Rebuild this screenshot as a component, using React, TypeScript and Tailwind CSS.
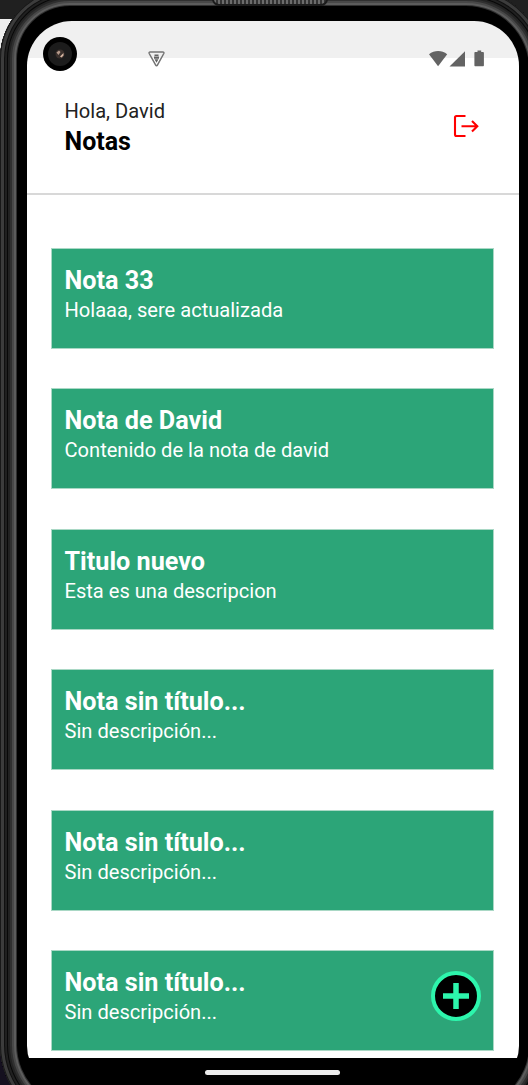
const notes = [
  { title: "Nota 33", body: "Holaaa, sere actualizada" },
  { title: "Nota de David", body: "Contenido de la nota de david" },
  { title: "Titulo nuevo", body: "Esta es una descripcion" },
  { title: "Nota sin título...", body: "Sin descripción..." },
  { title: "Nota sin título...", body: "Sin descripción..." },
  { title: "Nota sin título...", body: "Sin descripción..." },
];

function StatusBar() {
  return (
    <div className="relative z-10 h-[37px] shrink-0 bg-[#f0f0f0]">
      <div className="absolute left-4 top-4 flex size-[34px] items-center justify-center rounded-full bg-black">
        <div className="flex size-6 items-center justify-center rounded-full bg-[#1c1c1c]">
          <svg width="10" height="10" viewBox="0 0 10 10">
            <circle cx="5" cy="5" r="4.5" fill="#3a302c" />
            <path d="M1.5 3.5 4 1.5 5.5 3 3.5 6z" fill="#b59a8b" />
            <path d="M5 7.5 8.5 4 8.5 6.5 6.5 8.5z" fill="#d9b8a4" />
          </svg>
        </div>
      </div>
      <svg className="absolute left-[121px] top-[30px]" width="18" height="16" viewBox="0 0 18 16" fill="none">
        <path d="M2.2 1h12.6c.9 0 1.4.7 1 1.5L9.4 14.2c-.4.8-1.3.8-1.7 0L1.2 2.5C.8 1.7 1.3 1 2.2 1z" stroke="#747474" strokeWidth="1.5" />
        <path d="M6.500 3.500h4v1.500h-4zM6 5.500h5v2.200H6zM6.500 8.200h4L8.500 11.800z" fill="#626262" />
      </svg>
      <svg className="absolute left-[401px] top-[28px]" width="58" height="20" viewBox="0 0 58 20" fill="#636363">
        <path d="M1 5.2C6.5.8 13.7 .8 19.2 5.2L10.1 17.2z" />
        <path d="M21.5 17.4 37 2.2V17.400z" />
        <path d="M47.500 2.900h2V1.600h3.700v1.300h1.800c.5 0 .9.400.9.900v12.500c0 .6-.4 1-1 1h-7.500c-.6 0-1-.4-1-1V3.900c0-.6.4-1 1.100-1z" />
      </svg>
    </div>
  );
}

function Header() {
  return (
    <header className="flex h-[137px] shrink-0 justify-between border-b-2 border-[#d8d8d8] pl-[37.5px] pr-[40px] pt-[38px]">
      <div>
        <p className="text-[20.1px] leading-[30px] text-[#222]">Hola, David</p>
        <h1 className="text-[25px] font-bold leading-[32px] text-black">Notas</h1>
      </div>
      <button aria-label="Salir" className="mt-[18px] h-6 w-[27px]">
        <svg width="27" height="24" viewBox="0 0 27 24" fill="none" stroke="#ff0000" strokeWidth="2.1">
          <path d="M13.500 2H4.500C3.500 2 3 2.500 3 3.500V20.500C3 21.500 3.500 22 4.500 22H13.500" />
          <path d="M9.500 12.300H25M20 7 25.300 12.300 20 17.600" />
        </svg>
      </button>
    </header>
  );
}

export default function App() {
  return (
    <div className="relative h-[1085px] w-[528px] overflow-hidden bg-[#15101f] font-['Roboto',sans-serif]">
      <div className="h-[19px] bg-[#202020]" />
      <div className="h-[300px] bg-[#eeeeee]" />
      <div className="absolute -top-[11px] left-0 h-[1136px] w-[546px] rounded-b-[80px] rounded-tl-[70px] rounded-tr-[80px] bg-black px-[27px] pt-[32px] shadow-[inset_0_0_0_1px_#181818,inset_0_0_0_4px_#3c3c3c,inset_0_0_0_5px_#101010,inset_0_0_0_7px_#202020,inset_0_0_0_8px_#080808,inset_0_0_0_10px_#222222,inset_0_0_0_12px_#303030,inset_0_0_0_14px_#484848,inset_0_0_0_16px_#5c5c5c,inset_0_0_0_17px_#303030]">
        <div className="absolute left-[212px] top-[9px] h-[8px] w-[116px] rounded-b-[7px] border-2 border-[#1b1b1b] bg-[#414141] bg-[repeating-linear-gradient(90deg,#6b6b6b_0_2px,#333333_2px_4px)]" />
        <main className="flex h-[1064px] flex-col overflow-hidden rounded-t-[45px] rounded-b-[39px] bg-black">
          <StatusBar />
          <div className="relative flex h-[1000px] shrink-0 flex-col bg-white">
            <Header />
            <section className="flex flex-col gap-[41.4px] px-[25px] pt-[54px]">
              {notes.map((note, i) => (
                <article key={i} className="h-[99px] w-[441px] shrink-0 bg-[#2ca578] pl-[12.5px] pt-[16px] text-white shadow-[0_0_0_1px_#a9d8c5]">
                  <h2 className="text-[25.2px] font-bold leading-[32px]">{note.title}</h2>
                  <p className="text-[20.1px] leading-[26px]">{note.body}</p>
                </article>
              ))}
            </section>
            <button aria-label="Agregar nota" className="absolute bottom-[37.5px] right-[38px] flex size-[50px] items-center justify-center rounded-full border-4 border-[#2df5ac] bg-black">
              <svg width="26" height="26" viewBox="0 0 26 26" fill="none" stroke="#2df5ac" strokeWidth="5.5">
                <path d="M13 0V26M0 13H26" />
              </svg>
            </button>
          </div>
          <div className="flex h-[27px] shrink-0 justify-center pr-[1px] pt-[12px]">
            <div className="h-[5px] w-[135px] rounded-full bg-[#ececec]" />
          </div>
        </main>
      </div>
    </div>
  );
}
